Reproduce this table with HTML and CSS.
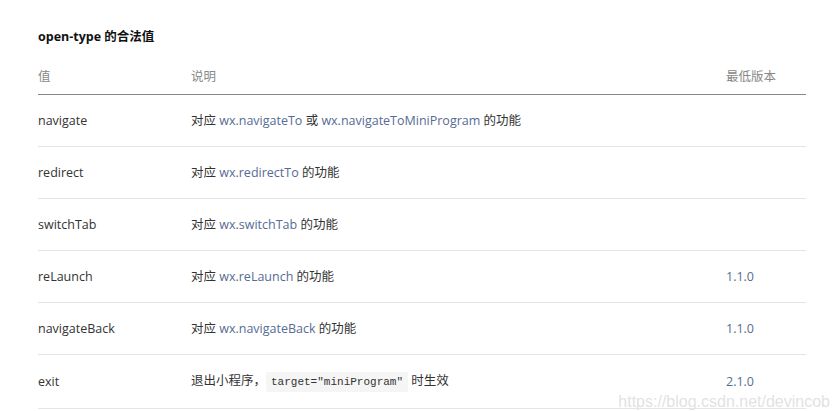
FILE: index.html
```html
<!doctype html>
<html lang="zh-CN">
<head>
    <meta charset="UTF-8">
    <meta name="viewport" content="width=device-width, initial-scale=1.0">
    <title>open-type 的合法值</title>
    <link rel="stylesheet" href="styles.css">
</head>
<body>
    <div class="doc">
        <h4 class="doc-title">open-type 的合法值</h4>
        <table class="doc-table">
            <thead>
                <tr>
                    <th class="col-value">值</th>
                    <th class="col-desc">说明</th>
                    <th class="col-ver">最低版本</th>
                </tr>
            </thead>
            <tbody>
                <tr>
                    <td>navigate</td>
                    <td>对应 <a href="#">wx.navigateTo</a> 或 <a href="#">wx.navigateToMiniProgram</a> 的功能</td>
                    <td></td>
                </tr>
                <tr>
                    <td>redirect</td>
                    <td>对应 <a href="#">wx.redirectTo</a> 的功能</td>
                    <td></td>
                </tr>
                <tr>
                    <td>switchTab</td>
                    <td>对应 <a href="#">wx.switchTab</a> 的功能</td>
                    <td></td>
                </tr>
                <tr>
                    <td>reLaunch</td>
                    <td>对应 <a href="#">wx.reLaunch</a> 的功能</td>
                    <td><a href="#">1.1.0</a></td>
                </tr>
                <tr>
                    <td>navigateBack</td>
                    <td>对应 <a href="#">wx.navigateBack</a> 的功能</td>
                    <td><a href="#">1.1.0</a></td>
                </tr>
                <tr>
                    <td>exit</td>
                    <td>退出小程序，<code>target="miniProgram"</code> 时生效</td>
                    <td><a href="#">2.1.0</a></td>
                </tr>
            </tbody>
        </table>
    </div>
    <div class="watermark">https://blog.csdn.net/devincob</div>
</body>
</html>
```

FILE: styles.css
```css
body {
    margin: 0;
    padding: 0;
    background: #fff;
    color: #333;
    font-family: "Open Sans", "Noto Sans CJK SC", sans-serif;
    font-size: 12.5px;
}

.doc {
    width: 768px;
    padding: 27px 0 0 38px;
}

.doc-title {
    margin: 0 0 11px;
    font-size: 12.5px;
    line-height: 20px;
    font-weight: bold;
    color: #111;
}

.doc-table {
    width: 100%;
    border-collapse: collapse;
}

.doc-table th {
    text-align: left;
    font-weight: normal;
    color: #888;
    line-height: 19px;
    padding: 9px 0 8px;
    border-bottom: 1px solid #888;
}

.col-value {
    width: 153px;
}

.col-ver {
    width: 80px;
}

.doc-table td {
    line-height: 19px;
    padding: 16px 0;
    border-bottom: 1px solid #e5e5e5;
}

.doc-table a {
    color: #576b95;
    text-decoration: none;
}

.doc-table code {
    font-family: "Liberation Mono", monospace;
    font-size: 11px;
    background: #f5f5f5;
    padding: 4px 5px;
    border-radius: 2px;
    color: #333;
}

.watermark {
    position: absolute;
    right: 10px;
    top: 393px;
    white-space: nowrap;
    font-family: "Liberation Sans", sans-serif;
    font-size: 16px;
    color: rgba(215, 215, 215, 0.75);
    text-shadow: 0 0 1px rgba(255, 255, 255, 0.8);
}
```
